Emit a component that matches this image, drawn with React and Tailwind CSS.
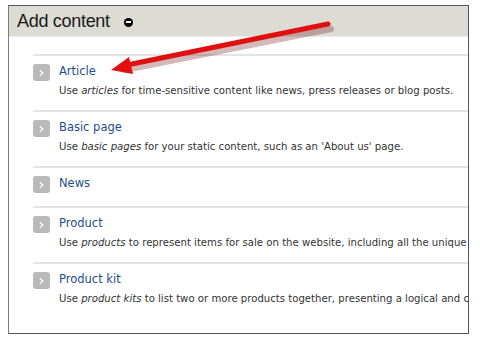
import React from 'react';

const items = [
  { title: 'Article', em: 'articles', rest: ' for time-sensitive content like news, press releases or blog posts.' },
  { title: 'Basic page', em: 'basic pages', rest: " for your static content, such as an 'About us' page." },
  { title: 'News' },
  { title: 'Product', em: 'products', rest: ' to represent items for sale on the website, including all the unique' },
  { title: 'Product kit', em: 'product kits', rest: ' to list two or more products together, presenting a logical and c' },
];

const Chevron = () => (
  <div className="w-[17px] h-[17px] mt-[1px] rounded-[3px] bg-[#b9b9b9] flex items-center justify-center shrink-0">
    <svg width="7" height="8" viewBox="0 0 7 8">
      <path d="M2 1.2 L4.8 4 L2 6.8" stroke="#f4f4f4" strokeWidth="1.6" fill="none" />
    </svg>
  </div>
);

const App = () => {
  return (
    <div className="w-[480px] h-[340px] bg-white relative overflow-hidden" style={{ fontFamily: '"DejaVu Sans", sans-serif' }}>
      <div className="ml-[8px] mt-[5px] w-[461px] h-[329px] border border-[#55506a] border-l-[#7a7a80] overflow-hidden flex flex-col">
        <div className="h-[31px] bg-[#dcdbd4] border-b border-[#ecebe6] flex items-center pl-[8px] gap-[14px] shrink-0">
          <span className="text-[18px] text-[#1a1a1a] tracking-[-0.3px]" style={{ fontFamily: '"Liberation Sans", sans-serif' }}>Add content</span>
          <span className="w-[9px] h-[9px] rounded-full bg-black flex items-center justify-center mt-[2px]">
            <span className="w-[5px] h-[2px] bg-white"></span>
          </span>
        </div>
        <div className="pl-[24px] pt-[17px]">
          {items.map((it) => (
            <div key={it.title} className={`border-t-2 border-[#e4e4e4] pt-[7px] ${it.em ? 'pb-[11px]' : 'pb-[13px]'} flex gap-[9px]`}>
              <Chevron />
              <div className="min-w-0">
                <div className="text-[11.5px] leading-[16px] text-[#1d4f8a] whitespace-nowrap">{it.title}</div>
                {it.em && (
                  <div className="mt-[4px] text-[10.15px] leading-[16px] text-[#333] whitespace-nowrap">
                    Use <em>{it.em}</em>{it.rest}
                  </div>
                )}
              </div>
            </div>
          ))}
        </div>
      </div>
      <svg className="absolute left-0 top-0 pointer-events-none" width="480" height="340">
        <line x1="330" y1="27" x2="124" y2="68" stroke="#6a1a1a" strokeOpacity="0.3" strokeWidth="6" strokeLinecap="round" transform="translate(1 2)" />
        <line x1="328" y1="24" x2="122" y2="66" stroke="#e01010" strokeWidth="5" strokeLinecap="round" />
        <polygon points="111,70 129,57 133,74" fill="#e01010" />
      </svg>
    </div>
  );
};

export default App;
